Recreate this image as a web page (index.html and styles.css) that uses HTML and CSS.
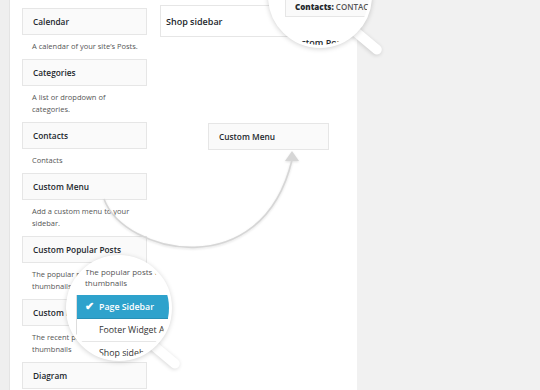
FILE: index.html
```html
<!DOCTYPE html>
<html lang="en">
<head>
  <meta charset="UTF-8" />
  <title>Widgets</title>
  <link rel="stylesheet" href="styles.css">
</head>
<body>
  <div class="page">
    <div class="rail"></div>
    <div class="panel">
      <div class="available">
        <div class="widget">
          <div class="widget-title">Calendar</div>
          <div class="widget-desc">A calendar of your site’s Posts.</div>
        </div>
        <div class="widget">
          <div class="widget-title">Categories</div>
          <div class="widget-desc">A list or dropdown of<br>categories.</div>
        </div>
        <div class="widget">
          <div class="widget-title">Contacts</div>
          <div class="widget-desc">Contacts</div>
        </div>
        <div class="widget">
          <div class="widget-title">Custom Menu</div>
          <div class="widget-desc">Add a custom menu to your<br>sidebar.</div>
        </div>
        <div class="widget">
          <div class="widget-title">Custom Popular Posts</div>
          <div class="widget-desc">The popular posts with<br>thumbnails</div>
        </div>
        <div class="widget">
          <div class="widget-title">Custom Recent Posts</div>
          <div class="widget-desc">The recent posts with<br>thumbnails</div>
        </div>
        <div class="widget">
          <div class="widget-title">Diagram</div>
        </div>
      </div>
      <div class="sidebar">
        <div class="sidebar-box">Shop sidebar</div>
        <div class="menu-widget">Custom Menu</div>
      </div>
    </div>

    <svg class="arc" width="540" height="390" viewBox="0 0 540 390">
      <path d="M104 199 C 124 254, 262 286, 292 160" fill="none" stroke="#d6d6d6" stroke-width="1.6"/>
      <polygon points="292,151 285,161 299,161" fill="#d6d6d6"/>
    </svg>

    <div class="handle handle-top"></div>
    <div class="lens lens-top">
      <div class="lens-card"><b>Contacts:</b> CONTACT</div>
      <div class="lens-peek">Custom Popular Posts</div>
    </div>

    <div class="handle handle-bottom"></div>
    <div class="lens lens-bottom">
      <div class="lens-desc">The popular posts with<br>thumbnails</div>
      <ul class="choices">
        <li class="chosen"><span class="tick">✔</span>Page Sidebar</li>
        <li>Footer Widget Area</li>
        <li>Shop sidebar</li>
      </ul>
    </div>
  </div>
</body>
</html>
```

FILE: styles.css
```css
body {
  margin: 0;
  background: #f1f1f1;
  font-family: 'Open Sans', sans-serif;
  color: #23282d;
}
.page {
  position: relative;
  display: flex;
  width: 540px;
  height: 390px;
  overflow: hidden;
}
.rail {
  width: 9px;
  background: #efefef;
  border-right: 1px solid #e4e4e4;
}
.panel {
  width: 347px;
  background: #fff;
  display: flex;
}
.available {
  width: 125px;
  margin-left: 12px;
  padding-top: 8px;
}
.widget-title {
  height: 25px;
  line-height: 25px;
  padding-left: 10px;
  background: #fafafa;
  border: 1px solid #e6e6e6;
  font-size: 8.3px;
  font-weight: 600;
}
.widget-desc {
  padding: 5px 0 7px 10px;
  font-size: 7.5px;
  line-height: 12px;
  color: #555;
  white-space: nowrap;
}
.sidebar {
  margin-left: 13px;
  padding-top: 5px;
}
.sidebar-box {
  width: 140px;
  height: 30px;
  line-height: 31px;
  padding-left: 5px;
  background: #fff;
  border: 1px solid #e6e6e6;
  font-size: 9px;
  font-weight: 600;
}
.menu-widget {
  width: 109px;
  height: 25px;
  line-height: 26px;
  margin: 86px 0 0 48px;
  padding-left: 10px;
  background: #fafafa;
  border: 1px solid #e6e6e6;
  font-size: 8.3px;
  font-weight: 600;
}
.arc {
  position: absolute;
  left: 0;
  top: 0;
  filter: drop-shadow(0 1px 1px rgba(0,0,0,0.12));
}
.lens {
  position: absolute;
  box-sizing: border-box;
  border-radius: 50%;
  overflow: hidden;
  background: #fff;
  border: 3px solid #fff;
  box-shadow: 0 1px 5px rgba(0,0,0,0.18);
}
.handle {
  position: absolute;
  height: 10px;
  background: #fff;
  border-radius: 5px;
  box-shadow: 0 1px 4px rgba(0,0,0,0.16);
  transform-origin: 0 50%;
  transform: rotate(40deg);
}
.handle-top {
  left: 350px;
  top: 22px;
  width: 40px;
}
.handle-bottom {
  left: 148px;
  top: 336px;
  width: 40px;
}
.lens-top {
  left: 268px;
  top: -56px;
  width: 104px;
  height: 104px;
}
.lens-card {
  position: absolute;
  left: 14px;
  top: 32px;
  width: 110px;
  height: 38px;
  padding: 21px 0 0 9px;
  box-sizing: border-box;
  background: #fafafa;
  border: 1px solid #e6e6e6;
  font-size: 8px;
  font-weight: 600;
  color: #555;
  white-space: nowrap;
}
.lens-card b {
  color: #23282d;
}
.lens-peek {
  position: absolute;
  left: 19px;
  top: 89px;
  font-size: 9px;
  font-weight: 600;
  white-space: nowrap;
}
.lens-bottom {
  left: 66px;
  top: 255px;
  width: 106px;
  height: 106px;
}
.lens-desc {
  position: absolute;
  left: 16px;
  top: 8px;
  font-size: 8px;
  line-height: 11px;
  color: #555;
  white-space: nowrap;
}
.choices {
  position: absolute;
  left: 7px;
  top: 37px;
  width: 120px;
  margin: 0;
  padding: 0;
  list-style: none;
  border-left: 1px solid #ddd;
  font-size: 8.8px;
  white-space: nowrap;
}
.choices li {
  height: 22px;
  line-height: 22px;
  padding-left: 22px;
  border-bottom: 1px solid #e6e6e6;
  color: #333;
}
.choices li.chosen {
  height: 23px;
  line-height: 23px;
  background: #2ea2cc;
  color: #fff;
  font-weight: 600;
  border-bottom: 1px solid #2790b6;
}
.tick {
  display: inline-block;
  width: 14px;
  margin-left: -14px;
  font-size: 10.5px;
}
```
